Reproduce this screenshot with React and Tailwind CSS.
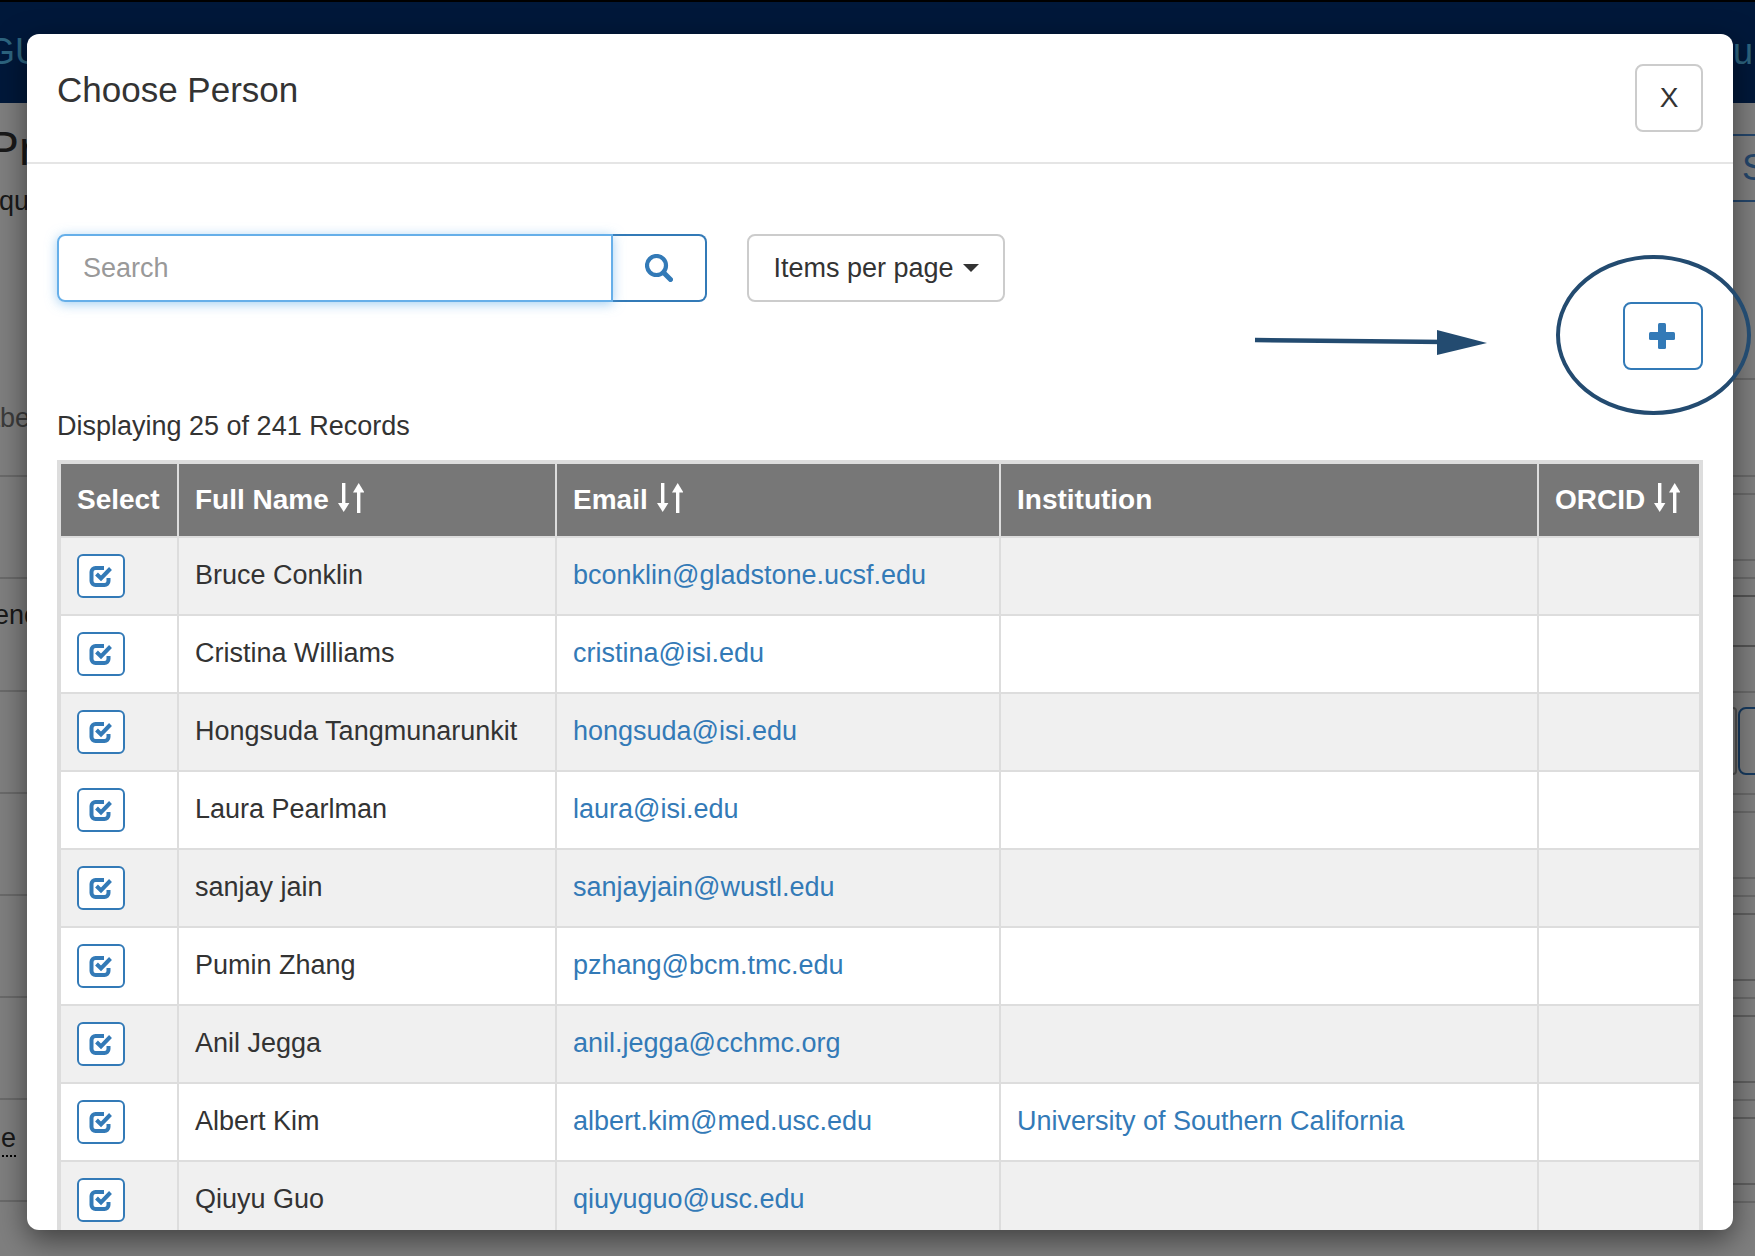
import React from 'react';

const people = [
  { name: 'Bruce Conklin', email: 'bconklin@gladstone.ucsf.edu' },
  { name: 'Cristina Williams', email: 'cristina@isi.edu' },
  { name: 'Hongsuda Tangmunarunkit', email: 'hongsuda@isi.edu' },
  { name: 'Laura Pearlman', email: 'laura@isi.edu' },
  { name: 'sanjay jain', email: 'sanjayjain@wustl.edu' },
  { name: 'Pumin Zhang', email: 'pzhang@bcm.tmc.edu' },
  { name: 'Anil Jegga', email: 'anil.jegga@cchmc.org' },
  { name: 'Albert Kim', email: 'albert.kim@med.usc.edu', institution: 'University of Southern California' },
  { name: 'Qiuyu Guo', email: 'qiuyuguo@usc.edu' },
];

// what is left visible of the page behind the dialog, right hand side
const rightRows = [
  'h-[33px] border-[#488cd6]',
  'h-[66px] border-[#488cd6]',
  'h-[178px] border-[#d5d5d5]',
  'h-[97px] border-[#d5d5d5]',
  'h-[18px] border-[#d5d5d5]',
  'h-[66px] border-[#d5d5d5]',
  'h-[18px] border-[#d5d5d5]',
  'h-[18px] border-[#a8a8a8]',
  'h-[50px] border-[#a8a8a8]',
  'h-[46px] border-[#d5d5d5]',
  'h-[102px] border-[#d5d5d5]',
  'h-[18px] border-[#d5d5d5]',
  'h-[66px] border-[#d5d5d5]',
  'h-[18px] border-[#d5d5d5]',
  'h-[18px] border-[#c0c0c0]',
  'h-[66px] border-[#c0c0c0]',
  'h-[18px] border-[#d5d5d5]',
  'h-[18px] border-[#c0c0c0]',
  'h-[66px] border-[#c0c0c0]',
  'h-[18px] border-[#d5d5d5]',
  'h-[18px] border-[#c0c0c0]',
  'h-[66px] border-[#c0c0c0]',
  'h-[18px] border-[#d5d5d5]',
];

const SortIcon = () => (
  <svg width="26" height="30" viewBox="0 0 26 30" className="inline-block ml-[9px] align-[-4px]" fill="#fff">
    <rect x="4" y="0" width="3.4" height="22" />
    <path d="M0 20h11.4l-5.7 9z" />
    <rect x="19" y="8" width="3.4" height="22" />
    <path d="M15 9.5h11.4L20.7 0z" />
  </svg>
);

const CheckIcon = () => (
  <svg width="24" height="24" viewBox="0 0 24 24" fill="none" stroke="#337ab7" strokeWidth="4">
    <path d="M15 4H6.5A4 4 0 0 0 2.500 8v9a4 4 0 0 0 4 4h9a4 4 0 0 0 4-4v-3" />
    <path d="M7.500 10l4.500 4.500 9.500-10" />
  </svg>
);

const SearchIcon = () => (
  <svg width="28" height="28" viewBox="0 0 28 28" fill="none" stroke="#337ab7">
    <circle cx="11.500" cy="11.500" r="9.500" strokeWidth="4.200" />
    <path d="M18.500 18.500l7 7" strokeWidth="5" strokeLinecap="round" />
  </svg>
);

const PlusIcon = () => (
  <svg width="26" height="26" viewBox="0 0 26 26" fill="#337ab7">
    <rect x="9" y="0" width="8" height="26" rx="1.500" />
    <rect x="0" y="9" width="26" height="8" rx="1.500" />
  </svg>
);

const Background = () => (
  <div className="flex h-full flex-col">
    <div className="flex h-[103px] shrink-0 justify-between overflow-hidden border-t-2 border-black bg-[#003074] pt-[30px] text-[36px] leading-[40px] text-[#5ac8ff]">
      <span className="-ml-[13px]">GU</span>
      <span className="mr-[2px]">ou</span>
    </div>
    <div className="flex flex-1 justify-between overflow-hidden text-[#333]">
      <div className="w-[27px] overflow-hidden whitespace-nowrap text-[27px] leading-[40px]">
        <div className="h-[374px] border-b-2 border-[#d5d5d5]">
          <div className="-ml-[13px] pt-[20px] text-[48px] leading-[52px]">Pr</div>
          <div className="-ml-[1px] pt-[6px]">qu</div>
          <div className="-ml-[30px] pt-[177px] text-[#777]">Labe</div>
        </div>
        <div className="h-[102px] border-b-2 border-[#d5d5d5]" />
        <div className="h-[113px] border-b-2 border-[#d5d5d5] pt-[16px]">
          <div className="-ml-[6px]">enc</div>
        </div>
        <div className="h-[102px] border-b-2 border-[#d5d5d5]" />
        <div className="h-[102px] border-b-2 border-[#d5d5d5]" />
        <div className="h-[102px] border-b-2 border-[#d5d5d5]" />
        <div className="h-[102px] border-b-2 border-[#d5d5d5]" />
        <div className="h-[102px] border-b-2 border-[#d5d5d5] pt-[18px]">
          <span className="-ml-[14px] inline-block border-b-2 border-dotted border-black leading-[34px]">ue</span>
        </div>
      </div>
      <div className="w-[22px] overflow-hidden">
        {rightRows.map((row, i) => (
          <div key={i} className={`border-b-2 ${row}`}>
            {i === 1 && <div className="pl-[9px] pt-[12px] text-[36px] leading-[40px] text-[#488cd6]">S</div>}
            {i === 10 && (
              <div className="flex gap-[1px] pt-[14px]">
                <div className="h-[68px] w-[4px] shrink-0 rounded-r-[8px] border-2 border-l-0 border-[#a8a8a8]" />
                <div className="h-[68px] w-[40px] shrink-0 rounded-[8px] border-2 border-[#2c74be]" />
              </div>
            )}
          </div>
        ))}
      </div>
    </div>
  </div>
);

const ChoosePersonModal = () => (
  <div className="absolute left-[27px] top-[34px] flex h-[1196px] w-[1706px] flex-col overflow-hidden rounded-[12px] bg-white shadow-[0_10px_30px_rgba(0,0,0,0.5)]">
    <div className="flex h-[130px] shrink-0 items-start justify-between border-b-2 border-[#e5e5e5] px-[30px] pt-[30px]">
      <h4 className="text-[35px] leading-[52px] text-[#333]">Choose Person</h4>
      <button className="h-[68px] w-[68px] rounded-[8px] border-2 border-[#ccc] bg-white text-[28px] text-[#333]">X</button>
    </div>

    <div className="px-[30px] pt-[70px]">
      <div className="flex h-[68px] items-start">
        <div className="flex h-[68px] w-[650px]">
          <input
            placeholder="Search"
            className="relative z-10 h-full w-[556px] rounded-l-[8px] border-2 border-[#66afe9] px-[24px] text-[27px] text-[#555] shadow-[0_2px_12px_rgba(102,175,233,0.6)] outline-none placeholder:text-[#999]"
          />
          <button className="flex h-full w-[94px] items-center justify-center rounded-r-[8px] border-2 border-l-0 border-[#337ab7] bg-white">
            <SearchIcon />
          </button>
        </div>
        <button className="ml-[40px] flex h-[68px] w-[258px] items-center justify-center gap-[9px] rounded-[8px] border-2 border-[#ccc] bg-white text-[27px] text-[#333]">
          Items per page
          <span className="h-0 w-0 border-x-[8px] border-t-[8px] border-x-transparent border-t-[#333]" />
        </button>
      </div>

      <div className="flex justify-end">
        <button className="flex h-[68px] w-[80px] items-center justify-center rounded-[8px] border-2 border-[#337ab7] bg-white pr-[2px]">
          <PlusIcon />
        </button>
      </div>

      <p className="mb-[14px] mt-[36px] text-[27px] leading-[40px] text-[#333]">Displaying 25 of 241 Records</p>

      <div className="border-4 border-[#ddd]">
        <table className="w-[1638px] table-fixed border-separate border-spacing-0 text-left text-[27px] leading-[40px] text-[#333]">
          <thead>
            <tr className="bg-[#777] text-[28px] font-bold text-white">
              <th className="h-[74px] w-[118px] border-b-2 border-r-2 border-[#ddd] pl-[16px]">Select</th>
              <th className="h-[74px] w-[378px] border-b-2 border-r-2 border-[#ddd] pl-[16px]">Full Name<SortIcon /></th>
              <th className="h-[74px] w-[444px] border-b-2 border-r-2 border-[#ddd] pl-[16px]">Email<SortIcon /></th>
              <th className="h-[74px] w-[538px] border-b-2 border-r-2 border-[#ddd] pl-[16px]">Institution</th>
              <th className="h-[74px] w-[160px] border-b-2 border-[#ddd] pl-[16px]">ORCID<SortIcon /></th>
            </tr>
          </thead>
          <tbody>
            {people.map((p, i) => (
              <tr key={p.email} className={i % 2 === 0 ? 'bg-[#f0f0f0]' : 'bg-white'}>
                <td className="h-[78px] border-b-2 border-r-2 border-[#ddd] pl-[16px]">
                  <button className="flex h-[44px] w-[48px] items-center justify-center rounded-[6px] border-2 border-[#337ab7] bg-white">
                    <CheckIcon />
                  </button>
                </td>
                <td className="h-[78px] border-b-2 border-r-2 border-[#ddd] pb-[2px] pl-[16px]">{p.name}</td>
                <td className="h-[78px] border-b-2 border-r-2 border-[#ddd] pb-[2px] pl-[16px] text-[#337ab7]">{p.email}</td>
                <td className="h-[78px] border-b-2 border-r-2 border-[#ddd] pb-[2px] pl-[16px] text-[#337ab7]">{p.institution}</td>
                <td className="h-[78px] border-b-2 border-[#ddd]" />
              </tr>
            ))}
          </tbody>
        </table>
      </div>
    </div>
  </div>
);

// hand drawn arrow and ring laid over the screenshot
const Annotation = () => (
  <svg className="absolute left-[1250px] top-[250px]" width="505" height="170" viewBox="0 0 505 170" fill="none">
    <path d="M5 90l190 2" stroke="#234b70" strokeWidth="4.500" />
    <path d="M187 80l50 13-50 12z" fill="#234b70" />
    <ellipse cx="403.500" cy="85" rx="95.500" ry="78" stroke="#234b70" strokeWidth="4" />
  </svg>
);

export default function App() {
  return (
    <div className="relative h-[1256px] w-[1755px] overflow-hidden bg-white font-['Liberation_Sans',Arial,sans-serif]">
      <Background />
      <div className="absolute inset-0 bg-black/50" />
      <ChoosePersonModal />
      <Annotation />
    </div>
  );
}
